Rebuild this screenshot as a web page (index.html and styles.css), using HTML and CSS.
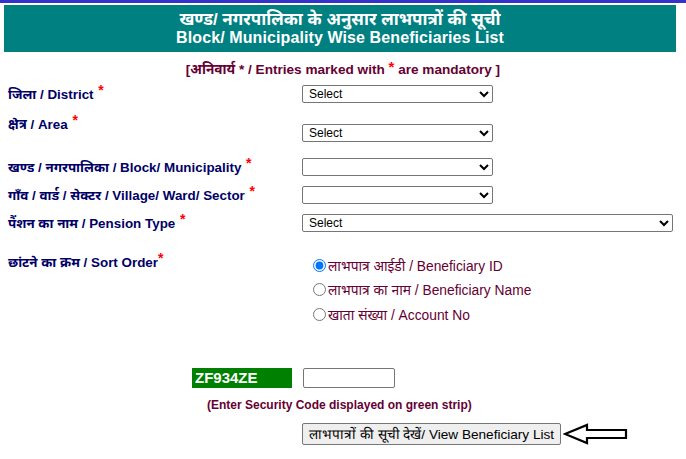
FILE: index.html
```html
<!DOCTYPE html>
<html lang="hi">
<head>
<meta charset="utf-8">
<title>Block/ Municipality Wise Beneficiaries List</title>
<link rel="stylesheet" href="styles.css">
</head>
<body>
<div class="topbar"></div>
<div class="banner">
  <div class="banner-hi">खण्ड/ नगरपालिका के अनुसार लाभपात्रों की सूची</div>
  <div class="banner-en">Block/ Municipality Wise Beneficiaries List</div>
</div>
<div class="mandatory">[अनिवार्य <span class="star">*</span> / Entries marked with <span class="star big">*</span> are mandatory ]</div>

<form class="form">
  <div class="row row-district">
    <label class="lbl">जिला / District <span class="req">*</span></label>
    <select class="sel"><option>Select</option></select>
  </div>
  <div class="row row-area">
    <label class="lbl">क्षेत्र / Area <span class="req">*</span></label>
    <select class="sel"><option>Select</option></select>
  </div>
  <div class="row row-block">
    <label class="lbl">खण्ड / नगरपालिका / Block/ Municipality <span class="req">*</span></label>
    <select class="sel"><option></option></select>
  </div>
  <div class="row row-village">
    <label class="lbl">गाँव / वार्ड / सेक्टर / Village/ Ward/ Sector <span class="req">*</span></label>
    <select class="sel"><option></option></select>
  </div>
  <div class="row row-pension">
    <label class="lbl">पैंशन का नाम / Pension Type <span class="req">*</span></label>
    <select class="sel sel-wide"><option>Select</option></select>
  </div>
  <div class="row row-sort">
    <label class="lbl">छांटने का क्रम / Sort Order<span class="req sup">*</span></label>
    <div class="radios">
      <label class="radio"><input type="radio" name="sort" checked>लाभपात्र आईडी / Beneficiary ID</label>
      <label class="radio"><input type="radio" name="sort">लाभपात्र का नाम / Beneficiary Name</label>
      <label class="radio"><input type="radio" name="sort">खाता संख्या / Account No</label>
    </div>
  </div>
  <div class="captcha-row">
    <div class="captcha">ZF934ZE</div>
    <input class="code" type="text">
  </div>
  <div class="note">(Enter Security Code displayed on green strip)</div>
  <div class="submit-row">
    <button type="button" class="btn">लाभपात्रों की सूची देखें/ View Beneficiary List</button>
    <svg class="arrow" width="66" height="24" viewBox="0 0 66 24">
      <path d="M2 12 L24 3 L24 8 L63 8 L63 16 L24 16 L24 21 Z" fill="none" stroke="#000" stroke-width="2.2" stroke-linejoin="miter"/>
    </svg>
  </div>
</form>
</body>
</html>
```
FILE: styles.css
```css
body {
  margin: 0;
  font-family: "Liberation Sans", Arial, "Noto Sans", sans-serif;
  background: #fff;
}
.topbar {
  height: 3px;
  background: #3333cc;
}
.banner {
  margin: 2px 10px 0 4px;
  height: 47px;
  background: #008080;
  color: #fff;
  text-align: center;
  font-weight: bold;
  box-sizing: border-box;
  padding-top: 5px;
}
.banner-hi {
  font-size: 17px;
  line-height: 19px;
}
.banner-en {
  font-size: 16px;
  line-height: 17px;
  letter-spacing: 0.1px;
}
.mandatory {
  margin-top: 7px;
  height: 16px;
  text-align: center;
  color: #660033;
  font-size: 13.6px;
  font-weight: bold;
  line-height: 16px;
}
.star {
  color: #660033;
}
.star.big {
  color: #ff0000;
  font-size: 15px;
  vertical-align: 2px;
}
.form {
  margin: 0;
  padding-left: 8px;
}
.row {
  display: flex;
  align-items: flex-start;
}
.lbl {
  width: 294px;
  height: 18px;
  flex: none;
  color: #000066;
  font-weight: bold;
  font-size: 13.4px;
  line-height: 18px;
  white-space: nowrap;
}
.req {
  color: #ff0000;
  font-size: 14px;
  position: relative;
  top: -4px;
  margin-left: 1px;
}
.req.sup {
  margin-left: 0;
}
.sel {
  width: 191px;
  height: 18px;
  font-family: "Liberation Sans", Arial, sans-serif;
  font-size: 12px;
  border: 1px solid #767676;
  border-radius: 2px;
  padding: 0 0 0 2px;
  background: #fff;
  color: #000;
}
.sel-wide {
  width: 371px;
}
.row-district { margin-top: 10px; }
.row-area { margin-top: 12px; }
.row-area .sel { margin-top: 9px; }
.row-block { margin-top: 16px; }
.row-village { margin-top: 10px; }
.row-pension { margin-top: 10px; }
.row-sort { margin-top: 21px; }
.radios {
  display: flex;
  flex-direction: column;
  margin-top: 0;
  margin-left: 10px;
}
.radio {
  display: flex;
  align-items: center;
  color: #660033;
  font-size: 13.8px;
  height: 24.5px;
}
.radio input {
  margin: 0 2px 0 1px;
  width: 13px;
  height: 13px;
}
.captcha-row {
  display: flex;
  align-items: center;
  margin-top: 41px;
  padding-left: 184px;
}
.captcha {
  width: 100px;
  height: 20px;
  background: #008000;
  color: #fff;
  font-weight: bold;
  font-size: 15px;
  line-height: 20px;
  padding-left: 3px;
  box-sizing: border-box;
}
.code {
  margin-left: 11px;
  width: 92px;
  height: 20px;
  box-sizing: border-box;
  border: 1px solid #767676;
  border-radius: 2px;
}
.note {
  margin-top: 10px;
  height: 15px;
  padding-left: 199px;
  color: #660033;
  font-weight: bold;
  font-size: 12px;
  line-height: 15px;
}
.submit-row {
  display: flex;
  align-items: center;
  margin-top: 9px;
  padding-left: 294px;
}
.btn {
  height: 22px;
  padding: 0 6px;
  font-family: "Liberation Sans", Arial, sans-serif;
  font-size: 13.6px;
  color: #000;
  background: #efefef;
  border: 1px solid #767676;
  border-radius: 2px;
}
.arrow {
  margin-left: 2px;
}
```
